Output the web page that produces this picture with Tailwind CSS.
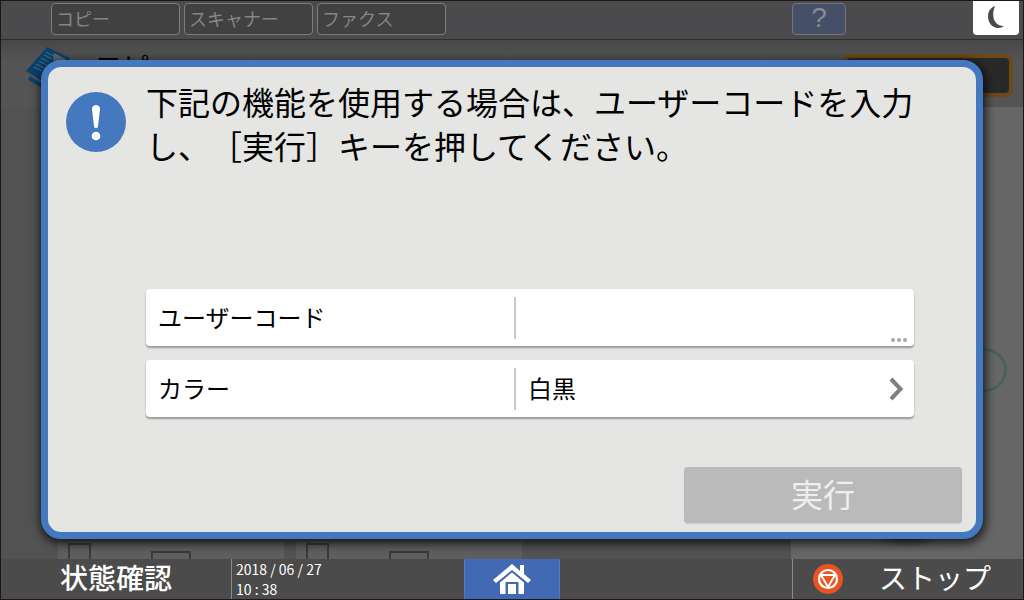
<!DOCTYPE html>
<html lang="ja">

<head>
    <meta charset="UTF-8" />
    <meta name="viewport" content="width=device-width, initial-scale=1.0" />
    <title>ユーザーコード認証</title>
    <script src="https://cdn.jsdelivr.net/npm/@tailwindcss/browser@4"></script>
</head>

<body class="font-['Noto_Sans_CJK_JP',sans-serif] [text-spacing-trim:space-all] bg-[#525252]">
    <div class="relative min-h-screen flex flex-col border border-[#1f1616] overflow-hidden">

        <!-- Function tabs -->
        <header class="h-[39px] shrink-0 flex items-start pt-[2px] pl-[50px] pr-1 bg-[#4b4a4c] border-b border-[#2e2e2e]">
            <nav class="flex gap-1 text-lg leading-7 text-[#858685]">
                <button class="w-[129px] h-8 pl-1 pb-[2px] text-left rounded-sm border border-[#7d7d7d] bg-[#404140]">コピー</button>
                <button class="w-[129px] h-8 pl-1 pb-[2px] text-left rounded-sm border border-[#7d7d7d] bg-[#404140]">スキャナー</button>
                <button class="w-[129px] h-8 pl-1 pb-[2px] text-left rounded-sm border border-[#7d7d7d] bg-[#404140]">ファクス</button>
            </nav>
            <button class="ml-auto mr-[127px] w-[54px] h-8 pb-[2px] rounded-sm border border-[#757575] bg-[#464f68] font-['Liberation_Sans',sans-serif] text-[28px] leading-7 text-[#8a8b8c]">?</button>
            <button aria-label="省エネ" class="-mt-[2px] w-[46px] h-[34px] rounded-b-sm bg-white flex items-center justify-center">
                <svg class="w-6 h-6" viewBox="0 0 24 24" fill="#4a4a4a">
                    <path d="M11 0C6 2 4 6 4 10.500C4 17 8.500 22 14 22C16.500 22 18.500 21.300 20 20C14.500 20.500 9.800 16.500 9.300 10C9 6 9.800 3 11 0Z" />
                </svg>
            </button>
        </header>

        <!-- Copy screen behind the dialog -->
        <main class="flex-1 flex flex-col">
            <div class="h-[67px] shrink-0 flex items-start pt-[6px] pl-[25px] pr-[10px] bg-linear-to-b from-[#474747] to-[#545454] to-30%">
                <svg class="w-11 h-11" viewBox="0 0 44 44">
                    <path d="M21 1L44 12L24 40L0 25Z" fill="#0b4169" />
                    <path d="M28 7L40 13L36 18L27 14Z" fill="#5a666d" />
                    <path d="M20 6l8 4M18 9l8 4M15 12l8 4M13 15l8 4M10 18l8 4M8 21l8 4" stroke="#4a6f8a" stroke-width="1" />
                    <path d="M3 32L20 42" stroke="#0b4169" stroke-width="4" />
                </svg>
                <span class="ml-6 text-[28px] leading-10 text-black">コピー</span>
                <div class="ml-auto mt-2 w-[170px] h-[43px] rounded-lg border-4 border-[#6c4917] bg-[#292929]"></div>
            </div>
            <div class="flex-1 flex">
                <div class="flex-1 flex items-end gap-3 pl-[57px]">
                    <div class="w-[226px] h-[17px] flex items-end gap-[60px] pl-[10px] bg-[#5d5f5e]">
                        <div class="w-[23px] h-4 border-2 border-b-0 border-[#3b3b3b]"></div>
                        <div class="w-10 h-2 border-2 border-b-0 border-[#3b3b3b]"></div>
                    </div>
                    <div class="w-[226px] h-[17px] flex items-end gap-[60px] pl-[10px] bg-[#5d5f5e]">
                        <div class="w-[23px] h-4 border-2 border-b-0 border-[#3b3b3b]"></div>
                        <div class="w-10 h-2 border-2 border-b-0 border-[#3b3b3b]"></div>
                    </div>
                </div>
                <div class="w-[232px] flex flex-col items-end justify-between bg-[#666]">
                    <div class="mt-[241px] mr-4 w-11 h-11 rounded-full border-[3px] border-[#48605e]"></div>
                    <div class="mb-5 mr-[86px] w-[60px] h-6 rounded-[50%] bg-[#151719] shadow-[0_0_8px_3px_#333]"></div>
                </div>
            </div>
        </main>

        <!-- Status bar -->
        <footer class="h-10 shrink-0 grid grid-cols-[1fr_96px_1fr] bg-[#4b4b4b] text-white">
            <div class="flex">
                <button class="w-[230px] pb-1 text-[28px] leading-9 font-medium">状態確認</button>
                <time datetime="2018-06-27T10:38" class="border-l border-[#8a8a8a] pl-1 text-sm leading-5">2018 / 06 / 27<br />10 : 38</time>
            </div>
            <button aria-label="ホーム" class="bg-[#4269b4] border-x border-[#527bc4] flex items-center justify-center">
                <svg class="w-10 h-8" viewBox="0 0 40 32" fill="white">
                    <path d="M20 1L1 17L4 20L20 7L36 20L39 17L32 11V2H28V8Z" />
                    <path d="M20 9.500L8 19.500V31H13.500V19H26.500V31H32V19.500Z" />
                    <path d="M16 21H24V31H16Z" />
                </svg>
            </button>
            <button class="ml-auto w-[231px] flex items-center border-l border-[#8a8a8a] pl-5 text-[28px] leading-9">
                <svg class="w-[30px] h-[30px]" viewBox="0 0 30 30" fill="none" stroke="white">
                    <circle cx="15" cy="15" r="15" fill="#e95420" stroke="none" />
                    <circle cx="15" cy="15" r="9" stroke-width="2.200" />
                    <path d="M8 11H22L15 23Z" stroke-width="2" stroke-linejoin="round" />
                </svg>
                <span class="ml-9 pb-1">ストップ</span>
            </button>
        </footer>

        <!-- User code dialog -->
        <div class="absolute inset-0 px-10 pt-[59px] pb-[60px] flex">
            <section role="dialog" aria-labelledby="message" class="flex-1 flex flex-col rounded-[20px] border-[7px] border-[#4579bf] bg-[#e5e5e3] text-black shadow-[1px_3px_10px_2px_rgba(0,0,0,0.7)]">
                <div class="flex pl-[18px] pt-3">
                    <svg class="mt-[13px] w-[60px] h-[60px] shrink-0" viewBox="0 0 60 60">
                        <circle cx="30" cy="30" r="30" fill="#4579bf" />
                        <path d="M26 17C26 11.500 34 11.500 34 17L32 34C31.500 37 28.500 37 28 34Z" fill="white" />
                        <circle cx="30" cy="44" r="4.300" fill="white" />
                    </svg>
                    <p id="message" class="ml-5 text-[32px] leading-[44px]">下記の機能を使用する場合は、ユーザーコードを入力<br />し、［実行］キーを押してください。</p>
                </div>

                <form class="flex-1 flex flex-col pt-[122px] pb-[9px]">
                    <div class="ml-[98px] mr-[62px] flex flex-col gap-[14px] text-2xl">
                        <div class="relative h-[57px] flex items-center rounded-sm bg-white shadow-[0_2px_2px_#999]">
                            <label for="userCode" class="w-[368px] pl-3 pb-[2px]">ユーザーコード</label>
                            <input id="userCode" type="text" class="flex-1 h-[42px] px-3 border-l-2 border-[#c8c8c8] outline-none" />
                            <svg class="absolute right-[6px] bottom-1 w-[18px] h-1" viewBox="0 0 18 4" fill="#a6a6a6">
                                <circle cx="3" cy="2" r="2" />
                                <circle cx="9" cy="2" r="2" />
                                <circle cx="15" cy="2" r="2" />
                            </svg>
                        </div>
                        <button type="button" class="h-[57px] flex items-center rounded-sm bg-white text-left shadow-[0_2px_2px_#999]">
                            <span class="w-[368px] pl-3 pb-[2px]">カラー</span>
                            <span class="flex-1 h-[42px] leading-10 px-3 border-l-2 border-[#c8c8c8]">白黒</span>
                            <svg class="mr-[10px] w-4 h-6" viewBox="0 0 16 24" fill="none" stroke="#808080" stroke-width="4">
                                <path d="M3 2L12.500 12L3 22" />
                            </svg>
                        </button>
                    </div>
                    <button type="submit" disabled class="mt-auto ml-auto mr-[14px] w-[278px] h-14 pb-1 rounded-sm bg-[#bababa] text-[32px] text-[#eee] shadow-[0_1px_1px_#ccc]">実行</button>
                </form>
            </section>
        </div>
    </div>
</body>

</html>
